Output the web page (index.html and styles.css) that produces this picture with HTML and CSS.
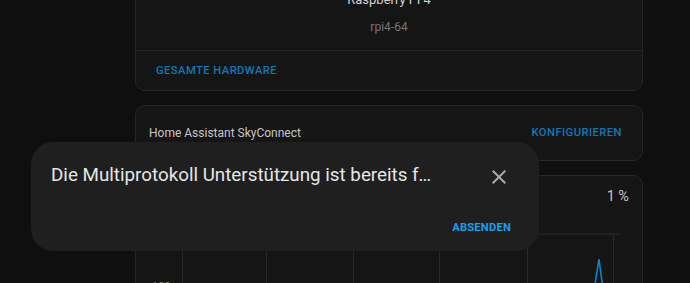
FILE: index.html
```html
<!DOCTYPE html>
<html lang="de">
<head>
<meta charset="utf-8">
<title>Hardware</title>
<link rel="stylesheet" href="styles.css">
</head>
<body>
<main class="page">
  <section class="card card-hw">
    <div class="hw-info">
      <div class="hw-name">Raspberry Pi 4</div>
      <div class="hw-board">rpi4-64</div>
    </div>
    <div class="card-actions">
      <button class="btn">Gesamte Hardware</button>
    </div>
  </section>

  <section class="card card-sky">
    <span class="sky-name">Home Assistant SkyConnect</span>
    <button class="btn">Konfigurieren</button>
  </section>

  <section class="card card-chart">
    <div class="chart-head"><span class="pct">1 %</span></div>
    <svg class="chart" width="506" height="90" viewBox="0 0 506 90">
      <g class="grid">
        <line x1="46" y1="27" x2="485" y2="27"/>
        <line x1="46.5" y1="27" x2="46.5" y2="90"/>
        <line x1="130.5" y1="27" x2="130.5" y2="90"/>
        <line x1="217.5" y1="27" x2="217.5" y2="90"/>
        <line x1="303.5" y1="27" x2="303.5" y2="90"/>
        <line x1="391.5" y1="27" x2="391.5" y2="90"/>
        <line x1="477.5" y1="27" x2="477.5" y2="90"/>
      </g>
      <path class="spike" d="M457 90 L463 52 L468 90"/>
      <text class="axis" x="16" y="83">100</text>
    </svg>
  </section>
</main>

<div class="dialog" role="dialog">
  <div class="dialog-head">
    <h2 class="dialog-title">Die Multiprotokoll Unterstützung ist bereits für diesen Adapter aktiviert</h2>
    <button class="close" aria-label="Schließen">
      <svg width="24" height="24" viewBox="0 0 24 24"><path d="M19,6.41L17.59,5L12,10.59L6.41,5L5,6.41L10.59,12L5,17.59L6.41,19L12,13.41L17.59,19L19,17.59L13.41,12L19,6.41Z"/></svg>
    </button>
  </div>
  <div class="dialog-actions">
    <button class="btn btn-dialog">Absenden</button>
  </div>
</div>
</body>
</html>
```

FILE: styles.css
```css
* { box-sizing: border-box; }

html, body {
  margin: 0;
  height: 100%;
  overflow: hidden;
}

body {
  background: #0f0f0f;
  font-family: Roboto, "Liberation Sans", sans-serif;
  color: #e1e1e1;
}

.page {
  width: 508px;
  margin-left: 135px;
  display: flex;
  flex-direction: column;
  gap: 14px;
}

.card {
  background: #151515;
  border: 1px solid #262626;
  border-radius: 10px;
}

.card-hw {
  margin-top: -28px;
}

.hw-info {
  padding: 18px 16px 14px;
  text-align: center;
}

.hw-name {
  font-size: 13px;
  line-height: 18px;
  color: #d4d4d4;
}

.hw-board {
  margin-top: 9px;
  font-size: 12px;
  line-height: 18px;
  color: #767676;
}

.card-actions {
  border-top: 1px solid #262626;
  height: 40px;
  padding-left: 20px;
  display: flex;
  align-items: center;
}

.btn {
  background: none;
  border: 0;
  padding: 0;
  font-family: inherit;
  font-size: 11.2px;
  font-weight: 500;
  letter-spacing: 0.45px;
  text-transform: uppercase;
  color: #0b7ab6;
  line-height: 16px;
}

.card-sky {
  height: 56px;
  padding: 0 20px 0 13px;
  display: flex;
  align-items: center;
  justify-content: space-between;
}

.sky-name {
  font-size: 12px;
  color: #c6c6c6;
}

.card-chart {
  height: 140px;
  overflow: hidden;
}

.chart-head {
  display: flex;
  justify-content: flex-end;
  padding: 11px 13px 0;
}

.pct {
  font-size: 14.5px;
  line-height: 20px;
  color: #c4c4c4;
}

.chart {
  display: block;
}

.grid line {
  stroke: #2a2a2a;
  stroke-width: 1;
}

.spike {
  fill: none;
  stroke: #0f86c9;
  stroke-width: 1.6;
  stroke-linejoin: miter;
}

.axis {
  font-size: 11px;
  fill: #8a8a8a;
  font-family: Roboto, "Liberation Sans", sans-serif;
}

.dialog {
  position: fixed;
  left: 31px;
  top: 142px;
  width: 508px;
  height: 109px;
  background: #1f1f1f;
  border-radius: 22px;
  padding: 21px 16px 11px 20px;
  display: flex;
  flex-direction: column;
}

.dialog-head {
  display: flex;
  align-items: flex-start;
}

.dialog-title {
  flex: 1;
  min-width: 0;
  margin: 0;
  font-size: 18.8px;
  font-weight: 400;
  line-height: 24px;
  color: #e6e6e6;
  white-space: nowrap;
  overflow: hidden;
  text-overflow: ellipsis;
}

.close {
  flex: none;
  margin: 2px 12px 0 54px;
  width: 24px;
  height: 24px;
  padding: 0;
  border: 0;
  background: none;
}

.close svg {
  display: block;
  fill: #a8a8a8;
}

.dialog-actions {
  margin-top: auto;
  display: flex;
  justify-content: flex-end;
  padding-right: 12px;
  height: 24px;
  align-items: center;
}

.btn-dialog {
  color: #14a2e6;
  font-weight: 700;
  letter-spacing: 0.2px;
}
```
